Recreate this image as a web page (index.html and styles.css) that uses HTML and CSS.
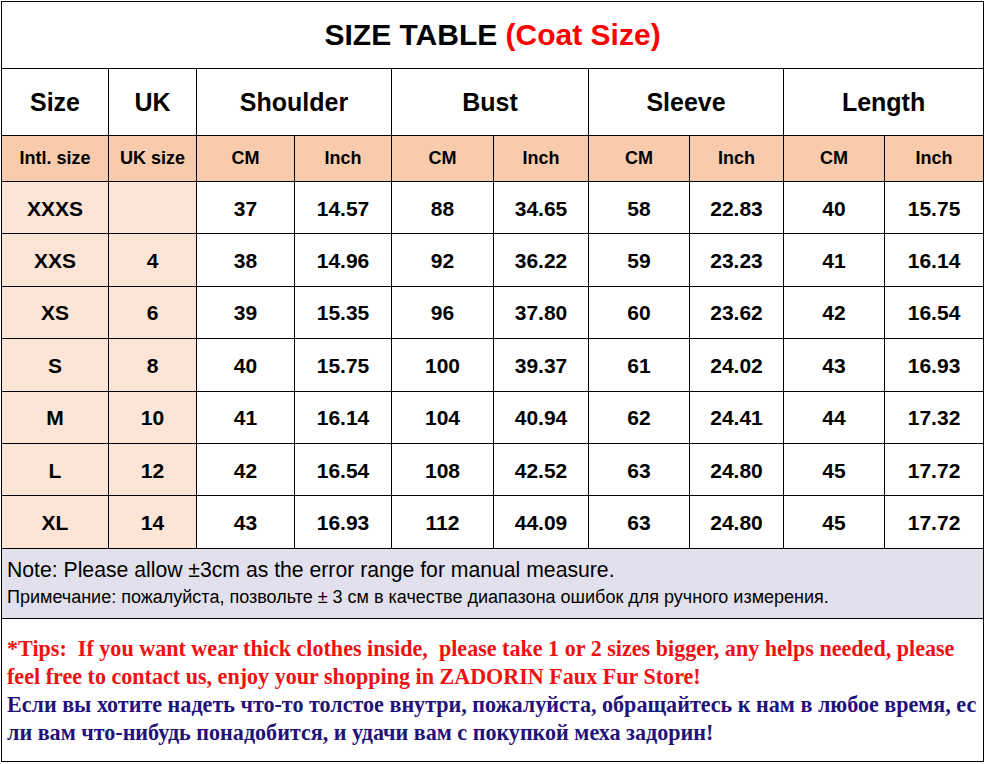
FILE: index.html
```html
<!DOCTYPE html>
<html>
<head>
<meta charset="utf-8">
<link rel="stylesheet" href="styles.css">
</head>
<body>
<table class="size-table">
  <colgroup>
    <col class="c1"><col class="c2"><col class="c3"><col class="c4"><col class="c5"><col class="c6"><col class="c7"><col class="c8"><col class="c9"><col class="c10">
  </colgroup>
  <tr class="title-row">
    <td colspan="10" class="title">SIZE TABLE <span class="red">(Coat Size)</span></td>
  </tr>
  <tr class="head-row">
    <td>Size</td><td>UK</td><td colspan="2">Shoulder</td><td colspan="2">Bust</td><td colspan="2">Sleeve</td><td colspan="2">Length</td>
  </tr>
  <tr class="sub-row">
    <td>Intl. size</td><td>UK size</td><td>CM</td><td>Inch</td><td>CM</td><td>Inch</td><td>CM</td><td>Inch</td><td>CM</td><td>Inch</td>
  </tr>
  <tr class="data-row"><td class="sz">XXXS</td><td class="sz"></td><td>37</td><td>14.57</td><td>88</td><td>34.65</td><td>58</td><td>22.83</td><td>40</td><td>15.75</td></tr>
  <tr class="data-row"><td class="sz">XXS</td><td class="sz">4</td><td>38</td><td>14.96</td><td>92</td><td>36.22</td><td>59</td><td>23.23</td><td>41</td><td>16.14</td></tr>
  <tr class="data-row"><td class="sz">XS</td><td class="sz">6</td><td>39</td><td>15.35</td><td>96</td><td>37.80</td><td>60</td><td>23.62</td><td>42</td><td>16.54</td></tr>
  <tr class="data-row"><td class="sz">S</td><td class="sz">8</td><td>40</td><td>15.75</td><td>100</td><td>39.37</td><td>61</td><td>24.02</td><td>43</td><td>16.93</td></tr>
  <tr class="data-row"><td class="sz">M</td><td class="sz">10</td><td>41</td><td>16.14</td><td>104</td><td>40.94</td><td>62</td><td>24.41</td><td>44</td><td>17.32</td></tr>
  <tr class="data-row"><td class="sz">L</td><td class="sz">12</td><td>42</td><td>16.54</td><td>108</td><td>42.52</td><td>63</td><td>24.80</td><td>45</td><td>17.72</td></tr>
  <tr class="data-row"><td class="sz">XL</td><td class="sz">14</td><td>43</td><td>16.93</td><td>112</td><td>44.09</td><td>63</td><td>24.80</td><td>45</td><td>17.72</td></tr>
  <tr class="note-row">
    <td colspan="10" class="note">
      <div class="note-en">Note: Please allow ±3cm as the error range for manual measure.</div>
      <div class="note-ru">Примечание: пожалуйста, позвольте ± 3 см в качестве диапазона ошибок для ручного измерения.</div>
    </td>
  </tr>
  <tr class="tips-row">
    <td colspan="10" class="tips">
      <div class="tips-en">*Tips:&nbsp; If you want wear thick clothes inside,&nbsp; please take 1 or 2 sizes bigger, any helps needed, please<br>feel free to contact us, enjoy your shopping in ZADORIN Faux Fur Store!</div>
      <div class="tips-ru">Если вы хотите надеть что-то толстое внутри, пожалуйста, обращайтесь к нам в любое время, ес<br>ли вам что-нибудь понадобится, и удачи вам с покупкой меха задорин!</div>
    </td>
  </tr>
</table>
</body>
</html>
```
FILE: styles.css
```css
html, body {
  margin: 0;
  padding: 0;
  background: #ffffff;
}
body {
  padding: 1px 0 0 1px;
  font-family: "Liberation Sans", Arial, sans-serif;
  color: #000;
}
.size-table {
  border-collapse: collapse;
  table-layout: fixed;
  width: 982px;
}
.c1 { width: 107px; }
.c2 { width: 88px; }
.c3 { width: 98px; }
.c4 { width: 97px; }
.c5 { width: 102px; }
.c6 { width: 95px; }
.c7 { width: 101px; }
.c8 { width: 94px; }
.c9 { width: 101px; }
.c10 { width: 99px; }
.size-table td {
  border: 1px solid #000;
  padding: 0;
  text-align: center;
  vertical-align: middle;
  font-weight: bold;
}
.title-row { height: 67px; }
.title {
  font-size: 30px;
  padding-bottom: 2px;
}
.red { color: #ff0000; }
.head-row { height: 67px; }
.head-row td { font-size: 25px; }
.sub-row { height: 46px; }
.sub-row td {
  font-size: 18px;
  background: #f8cbad;
}
.data-row { height: 52.4px; }
.data-row td {
  font-size: 21px;
  padding-top: 2px;
}
.data-row td.sz { background: #fce4d6; }
.note-row { height: 70px; }
.size-table td.note {
  background: #e2e0ec;
  text-align: left;
  font-weight: normal;
  padding: 0 0 0 5px;
  white-space: nowrap;
}
.note-en {
  font-size: 21.2px;
  line-height: 28px;
}
.note-ru {
  font-size: 18px;
  line-height: 26px;
}
.tips-row { height: 143px; }
.size-table td.tips {
  text-align: left;
  padding: 2px 0 0 5px;
  font-family: "Liberation Serif", "Times New Roman", serif;
  font-size: 22.1px;
  line-height: 28px;
  white-space: nowrap;
}
.tips-en { color: #ee1111; }
.tips-ru { color: #1f1278; }
```
